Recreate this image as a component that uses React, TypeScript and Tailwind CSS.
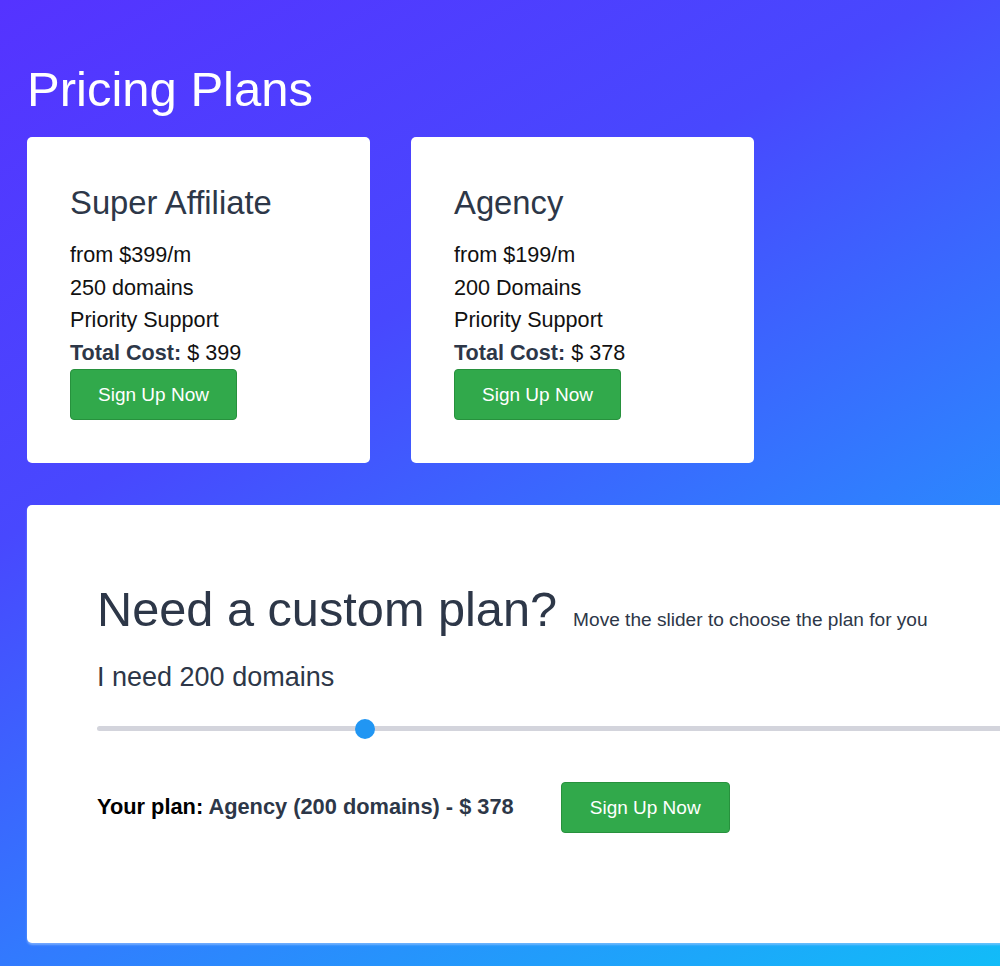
import React, { useState } from 'react';

type Plan = { name: string; price: number; domains: string; support: string; total: number };

const plans: Plan[] = [
  { name: 'Super Affiliate', price: 399, domains: '250 domains', support: 'Priority Support', total: 399 },
  { name: 'Agency', price: 199, domains: '200 Domains', support: 'Priority Support', total: 378 },
];

function SignUpButton() {
  return (
    <button
      type="button"
      className="w-[167px] h-[51px] shrink-0 rounded-[4px] border border-[#27913d] bg-[#31a94b] text-[19px] text-white leading-none"
    >
      Sign Up Now
    </button>
  );
}

function PlanCard({ plan }: { plan: Plan }) {
  return (
    <div className="w-[343px] rounded-[5px] bg-white pl-[43px] pr-6 pt-[46px] pb-[43px]">
      <h3 className="text-[32.8px] leading-[1.2] text-[#2d3748] mb-[17px]">{plan.name}</h3>
      <div className="text-[21.6px] leading-[32.5px] text-[#111]">
        <p>from ${plan.price}/m</p>
        <p>{plan.domains}</p>
        <p>{plan.support}</p>
        <p>
          <span className="font-bold text-[#2d3748]">Total Cost:</span> $ {plan.total}
        </p>
      </div>
      <SignUpButton />
    </div>
  );
}

export default function App() {
  const [domains] = useState(200);

  return (
    <div
      className="h-[966px] w-full overflow-hidden bg-[linear-gradient(150deg,#5533ff_0%,#4848fe_35%,#307efe_65%,#12bcf8_100%)]"
      style={{ fontFamily: '"Liberation Sans", Arial, sans-serif' }}
    >
      <div className="pl-[27px] pt-[60px]">
        <h1 className="text-[49px] leading-[1.2] text-white">Pricing Plans</h1>

        <div className="mt-[18px] flex gap-[41px]">
          {plans.map((p) => (
            <PlanCard key={p.name} plan={p} />
          ))}
        </div>

        {/* Custom plan panel, runs off the right edge */}
        <div className="mt-[42px] w-[1040px] h-[438px] rounded-[5px] bg-white pl-[70px] pt-[75px] shadow-[0_2px_2px_rgba(160,200,255,0.6)]">
          <h2 className="text-[48.7px] leading-[1.2] text-[#2d3748]">
            Need a custom plan?
            <span className="ml-[16px] text-[19.1px] text-[#2d3748]">Move the slider to choose the plan for you</span>
          </h2>
          <p className="mt-[22px] text-[27px] leading-[1.2] text-[#2d3748]">I need {domains} domains</p>

          <div className="mt-[26px] relative h-[20px] flex items-center">
            <div className="h-[5px] w-full rounded-full bg-[#d3d4dc]" />
            <div className="absolute left-[258px] top-0 h-[20px] w-[20px] rounded-full bg-[#2196f3]" />
          </div>

          <div className="mt-[43px] flex items-center gap-[47px]">
            <p className="text-[21.8px] leading-[1.2] font-bold text-[#2d3748]">
              <span className="text-black">Your plan:</span> Agency ({domains} domains) - $ 378
            </p>
            <button
              type="button"
              className="w-[169px] h-[51px] rounded-[4px] border border-[#27913d] bg-[#31a94b] text-[19px] text-white leading-none"
            >
              Sign Up Now
            </button>
          </div>
        </div>
      </div>
    </div>
  );
}
